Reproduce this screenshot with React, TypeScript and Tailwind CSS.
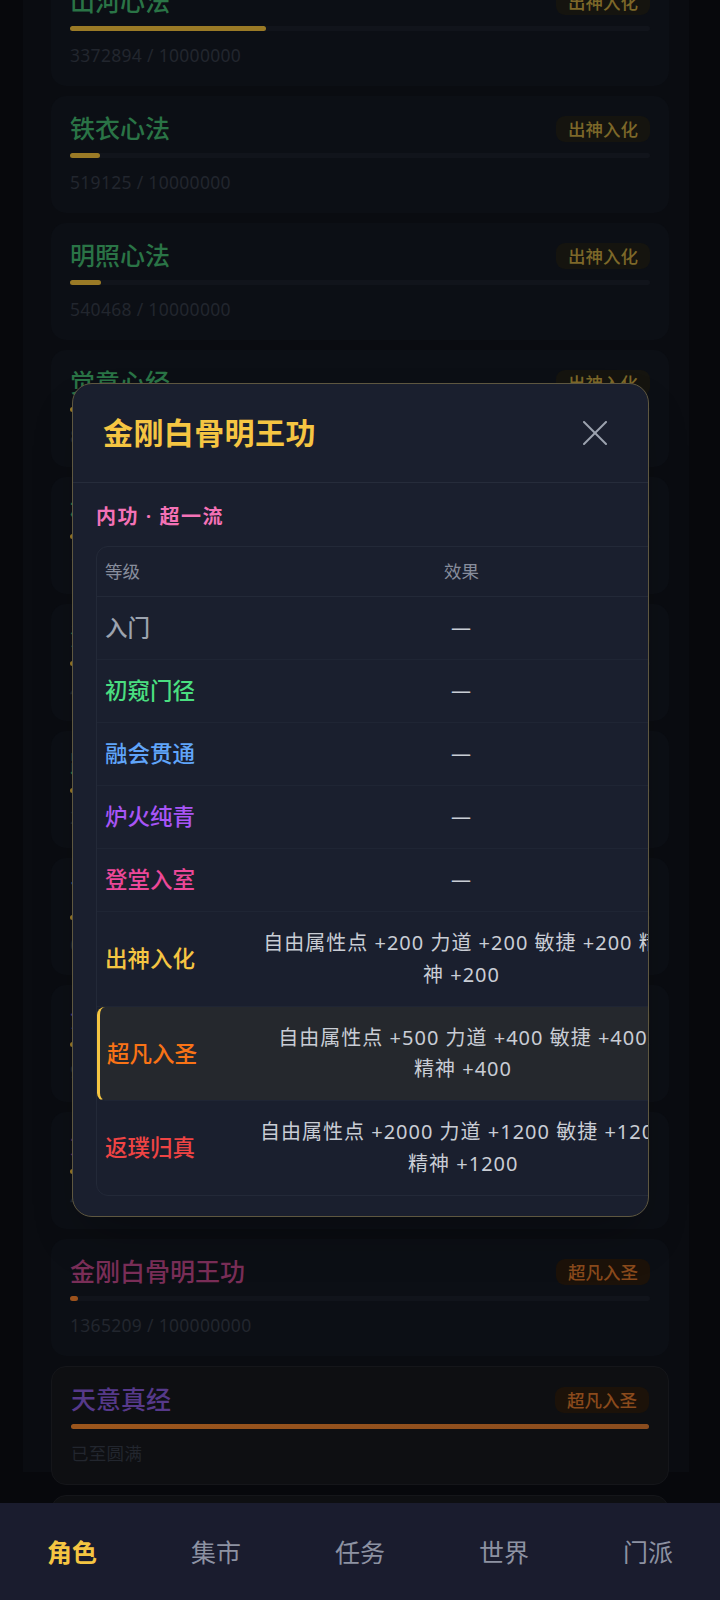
import React from 'react';

type Tone = 'gold' | 'orange';

interface Art {
  name: string;
  nameClass: string;
  rank: string;
  tone: Tone;
  cur: number;
  max: number;
  done?: boolean;
}

const arts: Art[] = [
  { name: '山河心法', nameClass: 'text-[#2a7446]', rank: '出神入化', tone: 'gold', cur: 3372894, max: 10000000 },
  { name: '铁衣心法', nameClass: 'text-[#2a7446]', rank: '出神入化', tone: 'gold', cur: 519125, max: 10000000 },
  { name: '明照心法', nameClass: 'text-[#2a7446]', rank: '出神入化', tone: 'gold', cur: 540468, max: 10000000 },
  { name: '觉意心经', nameClass: 'text-[#2a7446]', rank: '出神入化', tone: 'gold', cur: 812330, max: 10000000 },
  { name: '松风剑法', nameClass: 'text-[#2a7446]', rank: '出神入化', tone: 'gold', cur: 1204567, max: 10000000 },
  { name: '流云掌', nameClass: 'text-[#2a7446]', rank: '出神入化', tone: 'gold', cur: 402113, max: 10000000 },
  { name: '踏雪步', nameClass: 'text-[#2a7446]', rank: '出神入化', tone: 'gold', cur: 2750021, max: 10000000 },
  { name: '玄冰指', nameClass: 'text-[#2b4f7a]', rank: '出神入化', tone: 'gold', cur: 630450, max: 10000000 },
  { name: '紫霞神功', nameClass: 'text-[#55397f]', rank: '出神入化', tone: 'gold', cur: 998700, max: 10000000 },
  { name: '龙象般若功', nameClass: 'text-[#7a2e58]', rank: '出神入化', tone: 'gold', cur: 4102385, max: 10000000 },
  { name: '金刚白骨明王功', nameClass: 'text-[#7a2e58]', rank: '超凡入圣', tone: 'orange', cur: 1365209, max: 100000000 },
  { name: '天意真经', nameClass: 'text-[#56398a]', rank: '超凡入圣', tone: 'orange', cur: 1, max: 1, done: true },
  { name: '太玄经', nameClass: 'text-[#56398a]', rank: '超凡入圣', tone: 'orange', cur: 1, max: 1, done: true },
];

// effect text is kept in the same two lines the dialog shows
const levels = [
  { name: '入门', cls: 'text-[#9ca3af]', effect: ['—'] },
  { name: '初窥门径', cls: 'text-[#4ade80]', effect: ['—'] },
  { name: '融会贯通', cls: 'text-[#60a5fa]', effect: ['—'] },
  { name: '炉火纯青', cls: 'text-[#a855f7]', effect: ['—'] },
  { name: '登堂入室', cls: 'text-[#ec4899]', effect: ['—'] },
  { name: '出神入化', cls: 'text-[#f5c542]', effect: ['自由属性点 +200 力道 +200 敏捷 +200 精', '神 +200'] },
  { name: '超凡入圣', cls: 'text-[#f97316]', effect: ['自由属性点 +500 力道 +400 敏捷 +400', '精神 +400'], current: true },
  { name: '返璞归真', cls: 'text-[#ef4444]', effect: ['自由属性点 +2000 力道 +1200 敏捷 +1200', '精神 +1200'] },
];

const tabs = ['角色', '集市', '任务', '世界', '门派'];

const ArtCard: React.FC<{ art: Art }> = ({ art }) => {
  const pct = Math.min(100, (art.cur / art.max) * 100);
  const badge = art.tone === 'gold' ? 'bg-[#15140f] text-[#7d6829]' : 'bg-[#1c1209] text-[#8a4a1c]';
  const fill = art.tone === 'gold' ? 'bg-[#9a7a26]' : 'bg-[#9c521c]';
  return (
    <div
      className={`rounded-[15px] px-[19px] pb-[18px] pt-[17px] ${
        art.done ? 'border border-[#15161a] bg-[#0e0f12]' : 'bg-[#0c0f15]'
      }`}
    >
      <div className="flex h-[31px] items-center justify-between">
        <span className={`text-[25px] font-medium leading-[31px] ${art.nameClass}`}>{art.name}</span>
        <span className={`rounded-[9px] px-[12px] text-[17.5px] font-medium leading-[26px] ${badge}`}>{art.rank}</span>
      </div>
      <div className="mt-[9px] h-[5px] rounded-full bg-[#11141b]">
        <div
          className={`h-full rounded-full ${art.done ? 'bg-gradient-to-r from-[#9c561c] to-[#8a4c1e]' : fill}`}
          style={{ width: `${Math.max(pct, 1.2)}%` }}
        />
      </div>
      <div className="mt-[12px] text-[17.5px] leading-[25px] tracking-[0.3px] text-[#22262e]">
        {art.done ? '已至圆满' : `${art.cur} / ${art.max}`}
      </div>
    </div>
  );
};

const CloseIcon = () => (
  <svg width="24" height="24" viewBox="0 0 24 24" fill="none" stroke="#9ca3af" strokeWidth="2" strokeLinecap="round">
    <path d="M1 1 23 23" />
    <path d="M23 1 1 23" />
  </svg>
);

export default function App() {
  return (
    <div className="relative h-[1600px] w-full overflow-hidden bg-[#07080c] font-['Noto_Sans','Noto_Sans_CJK_SC',sans-serif]">
      <div className="flex h-full flex-col">
        <main className="flex-1 overflow-hidden">
          <div className="ml-[23px] mr-[31px] h-full bg-[#0a0c11] pl-[28px] pr-[20px]">
            <div className="-mt-[31px] flex flex-col gap-[10px]">
              {arts.map((a) => (
                <ArtCard key={a.name} art={a} />
              ))}
            </div>
          </div>
        </main>
        <nav className="flex h-[97px] items-center bg-[#1a1c2e]">
          {tabs.map((t, i) => (
            <div
              key={t}
              className={`flex-1 text-center text-[25px] leading-[34px] ${
                i === 0 ? 'font-semibold text-[#f5c542]' : 'text-[#8d92a2]'
              }`}
            >
              {t}
            </div>
          ))}
        </nav>
      </div>

      {/* detail dialog */}
      <div className="absolute left-[72px] top-[383px] w-[577px] overflow-hidden rounded-[20px] border border-[#5e5740] bg-[#1a1f2e] shadow-2xl">
        <div className="flex items-center justify-between border-b border-[#262c3b] py-[29px] pl-[30px] pr-[41px]">
          <h2 className="text-[30px] font-semibold leading-[40px] tracking-[0.4px] text-[#f5c542]">金刚白骨明王功</h2>
          <CloseIcon />
        </div>
        <div className="overflow-hidden px-[23px] pb-[20px] pt-[20px]">
          <div className="mb-[15px] text-[20px] font-semibold leading-[28px] tracking-[1.5px] text-[#f472b6]">内功 · 超一流</div>
          <div className="w-[578px] rounded-[12px] border border-[#232938]">
            <div className="flex border-b border-[#232938] py-[12px] text-[17.5px] leading-[25px] text-[#878d9c]">
              <div className="w-[153px] shrink-0 pl-[8px]">等级</div>
              <div className="flex-1 px-[10px] text-center">效果</div>
            </div>
            {levels.map((lv, i) => (
              <div
                key={lv.name}
                className={`flex items-center py-[15.25px] ${i < levels.length - 1 ? 'border-b border-[#1f2534]' : ''} ${
                  lv.current ? 'rounded-l-[8px] border-l-[3px] border-l-[#f5c542] bg-[#25282d]' : ''
                }`}
              >
                <div
                  className={`w-[153px] shrink-0 text-[22.5px] font-medium leading-[31.5px] ${lv.cls} ${
                    lv.current ? 'pl-[7px]' : 'pl-[8px]'
                  }`}
                >
                  {lv.name}
                </div>
                <div className="flex-1 px-[10px] text-center text-[20px] leading-[31.5px] tracking-[1px] text-[#c9cdd5]">
                  {lv.effect.map((line) => (
                    <div key={line} className="whitespace-nowrap">
                      {line}
                    </div>
                  ))}
                </div>
              </div>
            ))}
          </div>
        </div>
      </div>
    </div>
  );
}
